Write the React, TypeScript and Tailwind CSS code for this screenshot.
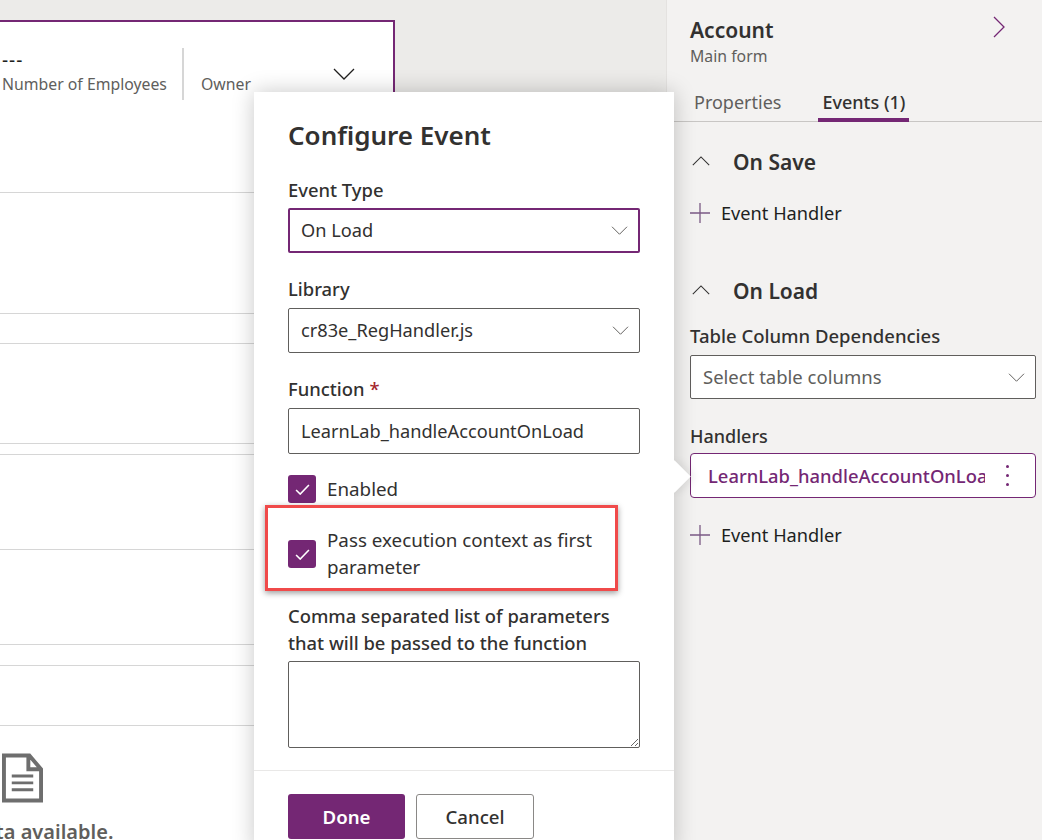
import React from "react";

const font = { fontFamily: '"Noto Sans", "Open Sans", sans-serif' };

function Chevron({ dir, className }: { dir: "down" | "up" | "right"; className?: string }) {
  const d = dir === "down" ? "M1 1l10 10L21 1" : dir === "up" ? "M1 11L11 1l10 10" : "M1 1l10 10L1 21";
  const box = dir === "right" ? "0 0 12 22" : "0 0 22 12";
  return (
    <svg viewBox={box} fill="none" stroke="currentColor" strokeWidth="1.3" className={className}>
      <path d={d} />
    </svg>
  );
}

function Plus() {
  return (
    <svg viewBox="0 0 20 20" fill="none" stroke="#7b5a85" strokeWidth="1.3" className="w-5 h-5 shrink-0">
      <path d="M10 0v20M0 10h20" />
    </svg>
  );
}

function Check() {
  return (
    <span className="w-7 h-7 shrink-0 rounded-[3px] bg-[#742774] flex items-center justify-center">
      <svg viewBox="0 0 16 12" fill="none" stroke="#ffffff" strokeWidth="1.7" className="w-[15px] h-[11px]">
        <path d="M1 6.5l4.5 4.5L15 1" />
      </svg>
    </span>
  );
}

function AddHandler({ className }: { className?: string }) {
  return (
    <div className={"flex items-center gap-[11px] text-[18.2px] leading-6 text-[#201f1e] " + (className ?? "")}>
      <Plus />
      <span>Event Handler</span>
    </div>
  );
}

export default function App() {
  return (
    <div style={font} className="relative w-[1042px] h-[840px] overflow-hidden flex bg-[#ecebe9]">
      {/* form canvas */}
      <div className="w-[667px] shrink-0 border-r border-[#e4e2e0] pt-5">
        <div className="bg-white h-[820px] w-[395px]">
          <div className="h-[73px] border-2 border-b-0 border-l-0 border-[#742774] flex">
            <div className="w-[184px] pl-[2px] pt-[22px] border-r-2 border-[#d6d6d6] h-[52px] mt-[26px]">
              <div className="-mt-[22px] text-[19px] tracking-[1px] leading-6 text-[#201f1e]">---</div>
              <div className="text-[15.8px] leading-6 text-[#605e5c] whitespace-nowrap">Number of Employees</div>
            </div>
            <div className="flex-1 pl-[17px] pt-[50px] text-[15.8px] leading-6 text-[#605e5c]">Owner</div>
            <div className="pr-[38px] pt-[46px]">
              <Chevron dir="down" className="w-[22px] h-3 text-[#201f1e]" />
            </div>
          </div>
          <div className="w-[667px] bg-white">
            <div className="h-[100px] border-b border-[#d6d6d6]" />
            <div className="h-[121px] border-b border-[#d6d6d6]" />
            <div className="h-[30px] border-b border-[#d6d6d6]" />
            <div className="h-[100px] border-b border-[#d6d6d6]" />
            <div className="h-[11px] border-b border-[#d6d6d6]" />
            <div className="h-[95px] border-b border-[#d6d6d6]" />
            <div className="h-[95px] border-b border-[#d6d6d6]" />
            <div className="h-[21px] border-b border-[#d6d6d6]" />
            <div className="h-[60px] border-b border-[#d6d6d6]" />
            <div className="pt-[27px] pl-[2px]">
              <svg viewBox="0 0 42 50" fill="none" stroke="#6e6e6e" strokeWidth="4" className="w-[41px] h-[50px]">
                <path d="M2 2h26l12 14v32H2zM27 2v14h13" />
                <path d="M10 23h22M10 30h22M10 37h22" strokeWidth="3" />
              </svg>
              <div className="mt-[15px] -ml-[64px] text-[20px] leading-7 font-semibold text-[#605e5c] whitespace-nowrap">
                No data available.
              </div>
            </div>
          </div>
        </div>
      </div>

      {/* side panel */}
      <div className="flex-1 bg-[#f3f2f1] text-[#323130]">
        <div className="pl-[23px] pt-[16px] flex justify-between pr-[37px]">
          <div>
            <div className="text-[21px] leading-7 font-semibold">Account</div>
            <div className="text-[15.8px] leading-6 text-[#605e5c]">Main form</div>
          </div>
          <Chevron dir="right" className="w-3 h-[22px] text-[#742774]" />
        </div>
        <div className="mt-[16px] h-[38px] ml-[7px] border-b border-[#c8c6c4] flex pl-[20px] gap-[41px] text-[18px] leading-6">
          <div className="text-[#605e5c] pt-[6px]">Properties</div>
          <div className="font-medium h-[38px] border-b-4 border-[#742774] px-1 pt-[6px] -mx-1">Events (1)</div>
        </div>

        <div className="pl-[23px] pr-[6px]">
          <div className="flex items-center pt-[26px] pl-[2px]">
            <Chevron dir="up" className="w-[18px] h-[10px] mb-[3px] text-[#323130]" />
            <span className="ml-[23px] text-[21px] leading-7 font-semibold">On Save</span>
          </div>
          <AddHandler className="mt-[25px]" />

          <div className="flex items-center mt-[52px] pl-[2px]">
            <Chevron dir="up" className="w-[18px] h-[10px] mb-[3px] text-[#323130]" />
            <span className="ml-[23px] text-[21px] leading-7 font-semibold">On Load</span>
          </div>
          <div className="mt-[19px] text-[18.5px] leading-6 font-medium">Table Column Dependencies</div>
          <div className="mt-[7px] h-[44px] rounded-[2px] border border-[#605e5c] bg-white flex items-center justify-between pl-3 pr-[10px] text-[18.5px] text-[#605e5c]">
            <span>Select table columns</span>
            <Chevron dir="down" className="w-[17px] h-[9px]" />
          </div>
          <div className="mt-[25px] text-[18px] leading-6 font-medium">Handlers</div>
          <div className="mt-[5px] h-[45px] rounded-[4px] border border-[#742774] bg-white flex items-center pl-[17px] pr-[26px] text-[18.4px] font-medium text-[#742774]">
            <span className="w-[277px] overflow-hidden whitespace-nowrap">LearnLab_handleAccountOnLoad</span>
            <span className="ml-auto flex flex-col gap-[6px]">
              <span className="w-[3px] h-[3px] rounded-full bg-[#742774]" />
              <span className="w-[3px] h-[3px] rounded-full bg-[#742774]" />
              <span className="w-[3px] h-[3px] rounded-full bg-[#742774]" />
            </span>
          </div>
          <AddHandler className="mt-[25px]" />
        </div>
      </div>

      {/* configure event callout */}
      <div className="absolute left-[254px] top-[92px] w-[420px] h-[760px] bg-white rounded-t-[2px] shadow-[0_0_22px_rgba(0,0,0,0.22)] text-[#323130]">
        <div className="absolute right-[-11.5px] top-[373px] w-[23px] h-[23px] rotate-45 bg-white shadow-[3px_-3px_8px_rgba(0,0,0,0.08)]" />
        <div className="relative bg-white px-[34px] pt-[25px] h-[678px]">
          <div className="text-[26px] leading-9 font-semibold">Configure Event</div>

          <div className="mt-[25px] text-[18.4px] leading-6 font-medium">Event Type</div>
          <div className="mt-[6px] h-[45px] rounded-[2px] border-2 border-[#742774] flex items-center justify-between pl-[11px] pr-[10px] text-[18.2px]">
            <span className="pt-[1px]">On Load</span>
            <Chevron dir="down" className="w-[17px] h-[9px] text-[#605e5c]" />
          </div>

          <div className="mt-[24px] text-[18.4px] leading-6 font-medium">Library</div>
          <div className="mt-[7px] h-[45px] rounded-[2px] border border-[#605e5c] flex items-center justify-between pl-3 pr-[10px] text-[18.2px]">
            <span>cr83e_RegHandler.js</span>
            <Chevron dir="down" className="w-[17px] h-[9px] text-[#605e5c]" />
          </div>

          <div className="mt-[24px] text-[18.4px] leading-6 font-medium">
            Function <span className="text-[#a4262c]">*</span>
          </div>
          <div className="mt-[7px] h-[46px] rounded-[2px] border border-[#605e5c] flex items-center pl-3 pt-[1px] text-[18.2px]">
            LearnLab_handleAccountOnLoad
          </div>

          <div className="mt-[21px] flex items-center gap-[11px] text-[18.8px] leading-7">
            <Check />
            <span>Enabled</span>
          </div>
          <div className="mt-[24px] flex items-center gap-[11px] text-[18.8px] leading-[27px]">
            <Check />
            <span className="w-[290px]">Pass execution context as first parameter</span>
          </div>
          <div className="mt-[21px] text-[18.4px] leading-[27px] font-medium">
            Comma separated list of parameters that will be passed to the function
          </div>
          <textarea className="mt-[5px] block w-[352px] h-[87px] rounded-[2px] border border-[#605e5c] bg-white" />

          {/* red highlight drawn on the screenshot */}
          <div className="absolute left-[11px] top-[413px] w-[353px] h-[86px] border-[3px] border-[#f04a4a] shadow-[0_2px_6px_rgba(0,0,0,0.4)]" />
        </div>
        <div className="relative bg-white border-t border-[#e9e8e7] px-[34px] pt-[23px] flex gap-[11px]">
          <div className="w-[117px] h-[45px] rounded-[3px] bg-[#742774] text-white flex items-center justify-center text-[18.67px] font-semibold">
            Done
          </div>
          <div className="w-[118px] h-[45px] rounded-[3px] border border-[#8a8886] flex items-center justify-center text-[18.67px] font-medium">
            Cancel
          </div>
        </div>
      </div>
    </div>
  );
}
